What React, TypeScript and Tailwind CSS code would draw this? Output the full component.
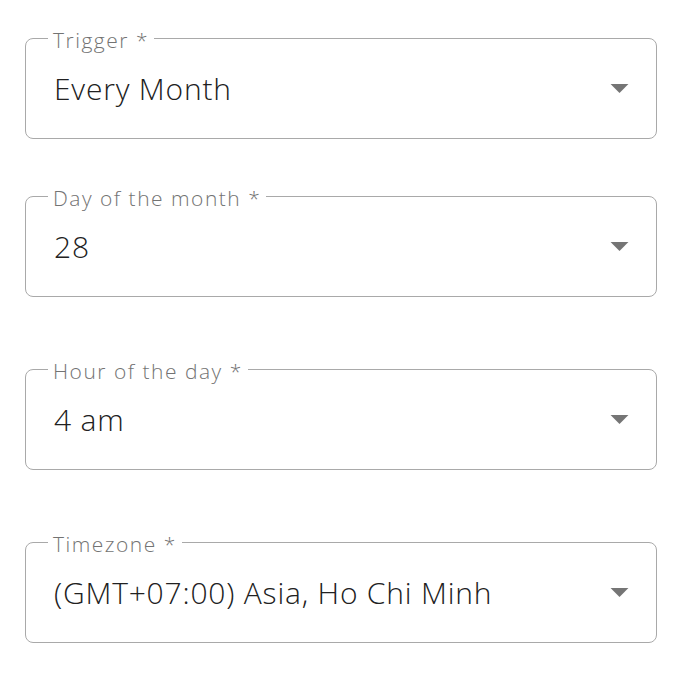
const fields = [
  { label: 'Trigger *', value: 'Every Month', gap: 'mt-0' },
  { label: 'Day of the month *', value: '28', gap: 'mt-[45px]' },
  { label: 'Hour of the day *', value: '4 am', gap: 'mt-[60px]' },
  { label: 'Timezone *', value: '(GMT+07:00) Asia, Ho Chi Minh', gap: 'mt-[60px]' },
]

function ArrowDropDown() {
  return (
    <svg viewBox="0 0 24 24" className="h-[43px] w-[43px] shrink-0 fill-[#757575]">
      <path d="M7 10l5 5 5-5z" />
    </svg>
  )
}

function SelectField({ label, value, gap }: { label: string; value: string; gap: string }) {
  return (
    <fieldset className={`${gap} ml-[25px] mr-[20px] rounded-[8px] border border-[#a9a9a9] p-0`}>
      <legend className="ml-[22px] px-[5px] pt-[4px] text-[21px] font-light leading-[20px] tracking-[1.5px] text-[#737373]">
        {label}
      </legend>
      <div className="mb-[13px] flex h-[75px] items-center pl-[28px] pr-[15px]">
        <span className="flex-1 pt-[2px] text-[30px] font-light leading-[40px] tracking-[0.8px] text-[#212121]">{value}</span>
        <ArrowDropDown />
      </div>
    </fieldset>
  )
}

export default function App() {
  return (
    <div className="min-h-screen bg-white pt-[26px] font-['Open_Sans',sans-serif]">
      {fields.map((f) => (
        <SelectField key={f.label} label={f.label} value={f.value} gap={f.gap} />
      ))}
    </div>
  )
}
